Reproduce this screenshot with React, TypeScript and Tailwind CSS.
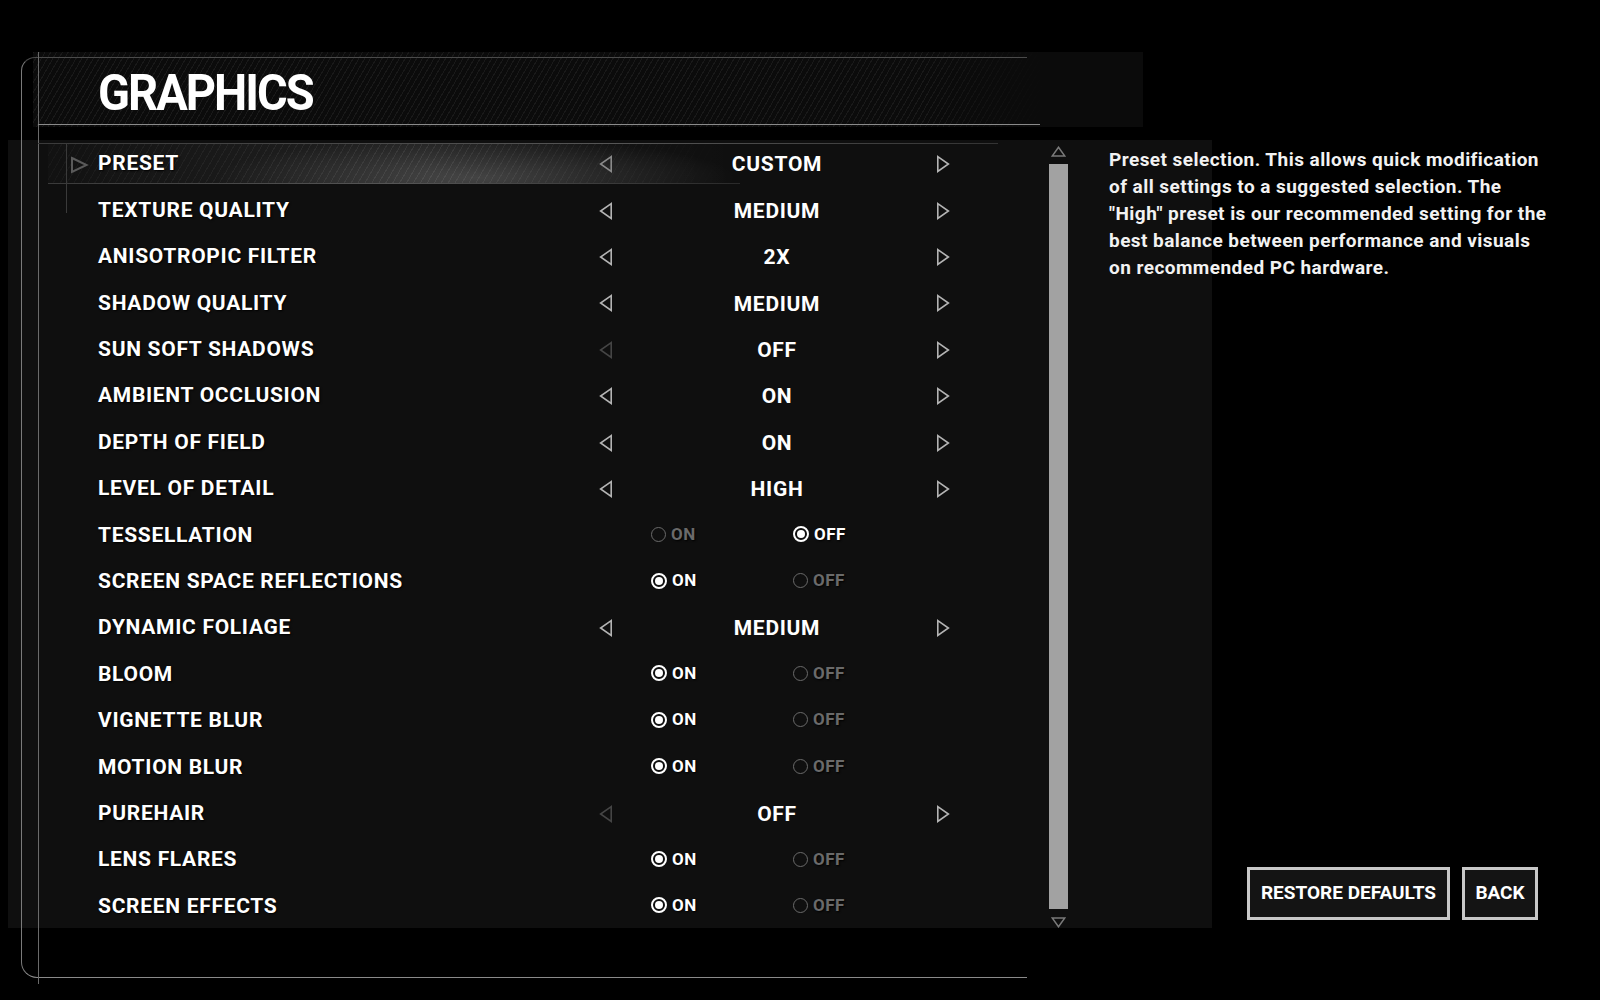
import React from 'react'

type Row =
  | { label: string; type: 'list'; value: string; dimLeft?: boolean }
  | { label: string; type: 'toggle'; on: boolean }

const rows: Row[] = [
  { label: 'PRESET', type: 'list', value: 'CUSTOM' },
  { label: 'TEXTURE QUALITY', type: 'list', value: 'MEDIUM' },
  { label: 'ANISOTROPIC FILTER', type: 'list', value: '2X' },
  { label: 'SHADOW QUALITY', type: 'list', value: 'MEDIUM' },
  { label: 'SUN SOFT SHADOWS', type: 'list', value: 'OFF', dimLeft: true },
  { label: 'AMBIENT OCCLUSION', type: 'list', value: 'ON' },
  { label: 'DEPTH OF FIELD', type: 'list', value: 'ON' },
  { label: 'LEVEL OF DETAIL', type: 'list', value: 'HIGH' },
  { label: 'TESSELLATION', type: 'toggle', on: false },
  { label: 'SCREEN SPACE REFLECTIONS', type: 'toggle', on: true },
  { label: 'DYNAMIC FOLIAGE', type: 'list', value: 'MEDIUM' },
  { label: 'BLOOM', type: 'toggle', on: true },
  { label: 'VIGNETTE BLUR', type: 'toggle', on: true },
  { label: 'MOTION BLUR', type: 'toggle', on: true },
  { label: 'PUREHAIR', type: 'list', value: 'OFF', dimLeft: true },
  { label: 'LENS FLARES', type: 'toggle', on: true },
  { label: 'SCREEN EFFECTS', type: 'toggle', on: true },
]

const description = [
  'Preset selection. This allows quick modification',
  'of all settings to a suggested selection. The',
  '"High" preset is our recommended setting for the',
  'best balance between performance and visuals',
  'on recommended PC hardware.',
]

const Arrow = ({ dir, color }: { dir: 'left' | 'right'; color: string }) => (
  <svg width="14" height="18" viewBox="0 0 14 18" fill="none" className="shrink-0">
    <path
      d={dir === 'left' ? 'M12.2 1.6 L1.6 9 L12.2 16.4 Z' : 'M1.8 1.6 L12.4 9 L1.8 16.4 Z'}
      stroke={color}
      strokeWidth="1.6"
      strokeLinejoin="miter"
    />
  </svg>
)

const Radio = ({ label, active }: { label: string; active: boolean }) => (
  <div className="flex items-center gap-[5px] [text-shadow:1px_1px_2px_#000]">
    {active ? (
      <span className="flex h-[16px] w-[16px] items-center justify-center rounded-full border-[2px] border-white">
        <span className="h-[8px] w-[8px] rounded-full bg-white" />
      </span>
    ) : (
      <span className="h-[15px] w-[15px] rounded-full border-[1.5px] border-[#6a6a6a]" />
    )}
    <span
      className={`text-[17px] leading-none font-bold tracking-[0.5px] ${active ? 'text-white' : 'text-[#6a6a6a]'}`}
    >
      {label}
    </span>
  </div>
)

const SettingRow = ({ row, selected }: { row: Row; selected: boolean }) => (
  <div className="relative flex h-[46.4px] items-center pl-[90px]">
    {selected && (
      <>
        <div className="absolute top-[2px] left-[40px] h-[41px] w-[690px] bg-[radial-gradient(ellipse_260px_40px_at_62%_85%,rgba(255,255,255,0.17),transparent),linear-gradient(90deg,rgba(255,255,255,0.01)_0%,rgba(255,255,255,0.05)_30%,rgba(255,255,255,0.08)_55%,rgba(255,255,255,0.02)_80%,transparent_100%)]" />
        <div className="absolute top-[2px] left-[40px] h-[41px] w-[690px] bg-[repeating-linear-gradient(120deg,rgba(255,255,255,0.07)_0px,rgba(255,255,255,0.07)_1px,transparent_1px,transparent_6px)] [mask-image:linear-gradient(90deg,rgba(0,0,0,0.4),#000_55%,transparent)]" />
        <div className="absolute top-[2px] left-[30px] h-px w-[960px] bg-[linear-gradient(90deg,#3a3a3a,#555_60%,#333)]" />
        <div className="absolute top-[42px] left-[40px] h-px w-[692px] bg-[linear-gradient(90deg,#3a3a3a,#555_50%,#2a2a2a)]" />
        <div className="absolute top-[2px] left-[58px] h-[70px] w-px bg-[#3a3a3a]" />
        <svg width="19" height="18" viewBox="0 0 19 18" className="absolute top-[15px] left-[62px]">
          <path d="M2 2 L16.5 9 L2 16 Z" fill="none" stroke="#5a5a5a" strokeWidth="2" />
        </svg>
      </>
    )}
    <div className="relative w-[501px] shrink-0 text-[21px] font-bold tracking-[0.7px] text-white [text-shadow:1px_1px_2px_#000]">
      {row.label}
    </div>
    {row.type === 'list' ? (
      <div className="relative flex items-center">
        <Arrow dir="left" color={row.dimLeft ? '#454545' : selected ? '#8a8a8a' : '#b4b4b4'} />
        <div className="w-[323px] shrink-0 pt-[2px] pl-[5px] text-center text-[21px] font-bold tracking-[0.7px] text-white">
          {row.value}
        </div>
        <Arrow dir="right" color="#b4b4b4" />
      </div>
    ) : (
      <div className="relative ml-[52px] flex items-center pb-[2px]">
        <div className="w-[142px] shrink-0">
          <Radio label="ON" active={row.on} />
        </div>
        <Radio label="OFF" active={!row.on} />
      </div>
    )}
  </div>
)

export default function App() {
  return (
    <div className="relative h-[1000px] w-[1600px] overflow-hidden bg-black pt-[52px] font-['Roboto','DejaVu_Sans',sans-serif]">
      {/* frame lines */}
      <div className="pointer-events-none absolute top-[57px] left-[21px] h-[921px] w-[1006px] rounded-tl-[14px] rounded-bl-[16px] border-t border-b-[1.5px] border-l-[1.5px] border-t-[#4a4a4a] border-b-[#8a8a8a] border-l-[#7a7a7a]" />
      <div className="pointer-events-none absolute top-[52px] left-[38px] h-[932px] w-px bg-[#6a6a6a]" />
      <div className="pointer-events-none absolute top-[124px] left-[38px] h-px w-[1002px] bg-[#8a8a8a]" />

      <header className="ml-[33px] flex h-[75px] w-[1110px] items-center bg-[#0b0b0b] bg-[linear-gradient(90deg,transparent_0%,transparent_80%,#0b0b0b_91%),repeating-linear-gradient(120deg,rgba(255,255,255,0.06)_0px,rgba(255,255,255,0.06)_1px,transparent_1px,transparent_5px)] pt-[5px] pl-[65px]">
        <h1 className="origin-left scale-y-[1.08] text-[47px] leading-none font-bold tracking-[-2px] text-white">
          GRAPHICS
        </h1>
      </header>

      <main className="mt-[13px] ml-[8px] flex h-[788px] w-[1204px] bg-[#0f0f0f]">
        <section className="w-[1032px] shrink-0 pt-[1px]">
          {rows.map((row, i) => (
            <SettingRow key={row.label} row={row} selected={i === 0} />
          ))}
        </section>

        <div className="flex w-[36px] shrink-0 flex-col items-center pt-[6px]">
          <svg width="15" height="11" viewBox="0 0 15 11">
            <path d="M7.5 1.2 L13.8 10 L1.2 10 Z" fill="none" stroke="#7a7a7a" strokeWidth="1.5" />
          </svg>
          <div className="mt-[7px] h-[746px] w-[19px] bg-[#a2a2a2]" />
          <svg width="15" height="11" viewBox="0 0 15 11" className="mt-[8px]">
            <path d="M1.2 1 L13.8 1 L7.5 9.8 Z" fill="none" stroke="#7a7a7a" strokeWidth="1.5" />
          </svg>
        </div>

        <aside className="flex w-[473px] shrink-0 flex-col pt-[6px] pl-[33px]">
          <div className="text-[19px] leading-[27px] font-bold tracking-[0.45px] text-[#f2f2f2]">
            {description.map((line) => (
              <div key={line} className="whitespace-nowrap">
                {line}
              </div>
            ))}
          </div>
          <div className="mt-auto mb-[8px] flex justify-end gap-[12px] pr-[11px]">
            <button className="h-[53px] w-[203px] border-[3px] border-[#c8c8c8] bg-[#141414] text-center text-[19px] font-bold text-white">
              RESTORE DEFAULTS
            </button>
            <button className="h-[53px] w-[76px] border-[3px] border-[#c8c8c8] bg-[#141414] text-center text-[19px] font-bold text-white">
              BACK
            </button>
          </div>
        </aside>
      </main>
    </div>
  )
}
